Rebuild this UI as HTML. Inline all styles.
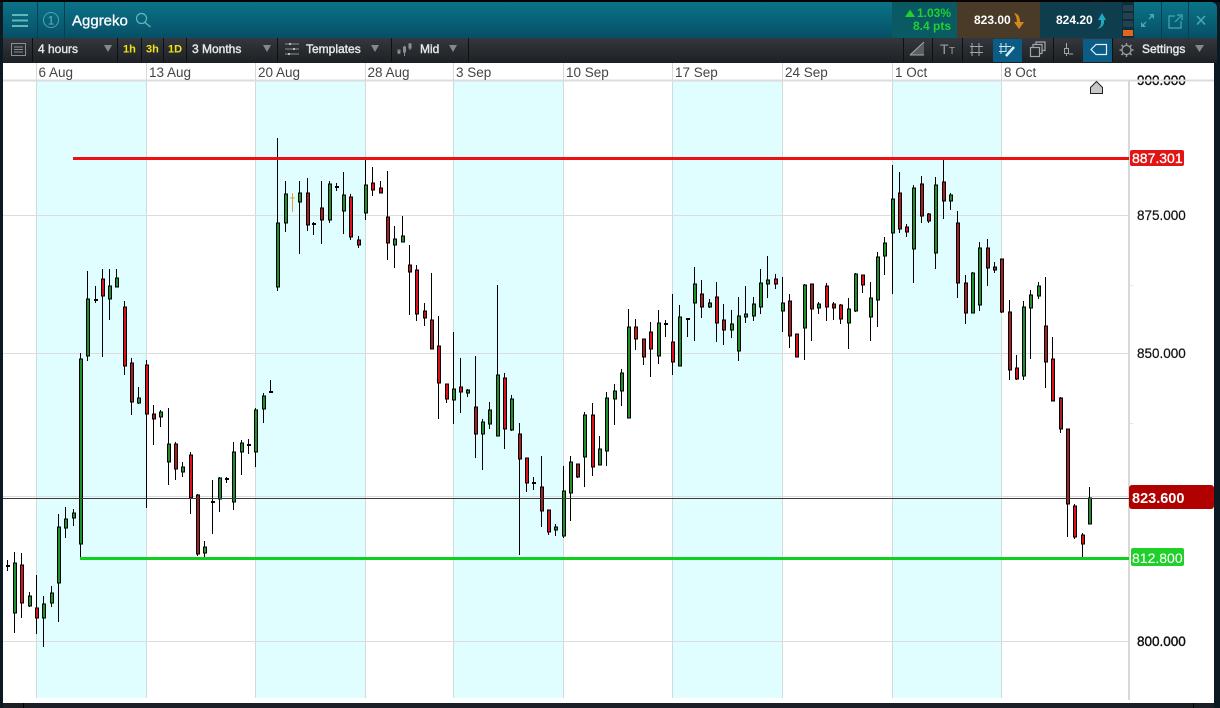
<!DOCTYPE html>
<html><head><meta charset="utf-8"><style>
html,body{margin:0;padding:0;background:#0b1a22;width:1220px;height:708px;overflow:hidden}
svg{display:block;font-family:"Liberation Sans",sans-serif}
.tb{font-size:12px;fill:#e6e8ea;stroke:#e6e8ea;stroke-width:.4}
.dt{font-size:13.5px;fill:#444}
.ax{font-size:13.5px;fill:#111;stroke:#111;stroke-width:.4}
.yl{font-size:11px;font-weight:bold;fill:#efe31c}
</style></head><body>
<svg width="1220" height="708" viewBox="0 0 1220 708" xmlns="http://www.w3.org/2000/svg">
<defs>
<linearGradient id="h" x1="0" y1="0" x2="0" y2="1"><stop offset="0" stop-color="#0b7488"/><stop offset="1" stop-color="#064f66"/></linearGradient>
<linearGradient id="t" x1="0" y1="0" x2="0" y2="1"><stop offset="0" stop-color="#34383d"/><stop offset="1" stop-color="#1d2024"/></linearGradient>
</defs>
<rect width="1220" height="708" fill="#0b1a22"/>
<rect y="0" width="1220" height="2" fill="#050505"/>
<!-- header -->
<path d="M3 2H1211a6 6 0 0 1 6 6V38H3z" fill="url(#h)"/>
<g stroke="#0a3d4e" stroke-width="1"><path d="M37.500 2V38M64.500 2V38"/></g>
<rect x="892" y="2" width="65" height="36" fill="#0a5a63"/>
<rect x="957" y="2" width="83" height="36" fill="#4a3b29"/>
<rect x="1040" y="2" width="82" height="36" fill="#0e3e4e"/>
<rect x="1122" y="2" width="12" height="36" fill="#0b2f3c"/>
<g fill="#24414d"><rect x="1123" y="5" width="10" height="6"/><rect x="1123" y="13" width="10" height="6"/><rect x="1123" y="21" width="10" height="6"/></g>
<rect x="1123" y="30" width="10" height="6" fill="#e2661c"/>
<path d="M1161.500 2V38M1188.500 2V38" stroke="#0a3d4e"/>
<path d="M12 15H28M12 20.500H28M12 26H28" stroke="#62b7bd" stroke-width="2"/>
<circle cx="51" cy="20" r="7.500" fill="none" stroke="#4ea5b0" stroke-width="1"/>
<text x="51" y="24.500" font-size="12" fill="#5fb3bd" text-anchor="middle">1</text>
<text x="72" y="25.500" font-size="15" fill="#fff" stroke="#fff" stroke-width=".3">Aggreko</text>
<circle cx="141.500" cy="18.500" r="5" fill="none" stroke="#62b7bd" stroke-width="1.200"/>
<path d="M145 22.500L150.500 27" stroke="#62b7bd" stroke-width="1.300"/>
<polygon points="905,17 915,17 910,9.500" fill="#1fd030"/>
<text x="951" y="17" font-size="12" font-weight="bold" fill="#1fd030" text-anchor="end">1.03%</text>
<text x="951" y="30" font-size="12" font-weight="bold" fill="#1fd030" text-anchor="end">8.4 pts</text>
<text x="974" y="24" font-size="12" font-weight="bold" fill="#fff">823.00</text>
<path d="M1014 13Q1020 14 1020 22H1024L1019 29L1014 22H1017Q1017 17 1014 13Z" fill="#d68a1e"/>
<text x="1056" y="24" font-size="12" font-weight="bold" fill="#fff">824.20</text>
<path d="M1097 29Q1102 26 1101 20H1098L1102 13L1106 20H1104Q1105 27 1097 29Z" fill="#22a9c0"/>
<g stroke="#45a9b4" stroke-width="1.300" fill="none">
<path d="M1142 26L1146 22M1153 15L1149 19"/>
<path d="M1175 16H1169V28H1181V21M1175 22L1181 16M1177 15H1182V20" stroke-width="1.200"/>
<path d="M1197 16L1205 24.500M1205 16L1197 24.500" stroke-width="1.600"/>
</g>
<polygon points="1141,27 1141,22 1146,27" fill="#45a9b4"/><polygon points="1154,14 1154,19 1149,14" fill="#45a9b4"/>
<!-- toolbar -->
<rect x="3" y="38" width="1214" height="25" fill="url(#t)"/>
<g stroke="#0e1012"><path d="M32.500 38V62M117.500 38V62M141.500 38V62M163.500 38V62M186.500 38V62M277.500 38V62M391.500 38V62M468.500 38V62M903.500 38V62M932.500 38V62M962.500 38V62M1053.500 38V62M1112.500 38V62"/></g>
<rect x="993" y="39" width="29" height="23" fill="#0a5c85"/>
<rect x="1083" y="39" width="29" height="23" fill="#0a5c85"/>
<rect x="11.500" y="43.500" width="14" height="12" fill="none" stroke="#8b8f93"/>
<path d="M14 47H23M14 49.500H23M14 52H23" stroke="#8b8f93"/>
<text x="38" y="53" class="tb">4 hours</text>
<text x="123" y="52.500" class="yl">1h</text>
<text x="146" y="52.500" class="yl">3h</text>
<text x="168" y="52.500" class="yl">1D</text>
<text x="192" y="53" class="tb">3 Months</text>
<text x="306" y="53" class="tb">Templates</text>
<text x="420" y="53" class="tb">Mid</text>
<text x="1142" y="53" class="tb">Settings</text>
<g fill="#85898d"><polygon points="104,45 112,45 108,52"/><polygon points="263,45 271,45 267,52"/><polygon points="371,45 379,45 375,52"/><polygon points="449,45 457,45 453,52"/><polygon points="1195,45 1204,45 1199.500,52"/></g>
<g stroke="#8b8f93" stroke-width="1.300" fill="none">
<path d="M285 44H299M285 49H299M285 54H299" stroke-width="1"/>
<path d="M290 43V45M294 48V50M289 53V55" stroke="#ddd" stroke-width="1.500"/>
<path d="M399 51V54M404.500 46V56M410 43V50" stroke-width="1"/>
<rect x="398" y="50" width="2" height="3" stroke-width="1"/><rect x="403.500" y="47" width="2" height="5" stroke-width="1"/><rect x="409" y="44" width="2" height="4" stroke-width="1"/>
</g>
<!-- right toolbar icons -->
<path d="M910 55L924 42V55Z" fill="#5a5e62"/><path d="M910 55L924 42M910 55H924" stroke="#a6a9ac" fill="none"/>
<text x="940" y="54" font-size="14" fill="#9a9da0">T</text><text x="949" y="54" font-size="10" fill="#9a9da0">T</text>
<path d="M972 43V56M979 43V56M970 46.500H983M970 52.500H983" stroke="#a3a6a9" stroke-width="1"/>
<path d="M1001 43V54M1006 43V52M999 46.500H1011M999 51.500H1006" stroke="#cfe6f2" stroke-width="1"/>
<path d="M1006 56L1014 47" stroke="#d8ecf6" stroke-width="2.500"/>
<g fill="none" stroke="#a3a6a9" stroke-width="1.200"><rect x="1030.500" y="47.500" width="9" height="9"/><path d="M1033 47V44.500H1042V53.500H1039.500"/><path d="M1036 44V42H1045V50.500H1042"/></g>
<path d="M1066.500 43V56M1069 54H1073" stroke="#a3a6a9"/><rect x="1064.500" y="48.500" width="4" height="5" fill="#2a2d31" stroke="#a3a6a9"/>
<path d="M1091 49.500L1096 44.500H1106.500V54.500H1096Z" fill="none" stroke="#e2f0f6" stroke-width="1.200"/>
<g stroke="#9a9da0" fill="none"><circle cx="1126.500" cy="50" r="4.500" stroke-width="1.300"/><path d="M1126.500 43V45M1126.500 55V57M1119.500 50H1122M1131 50H1133.500M1121.500 45L1123.300 46.800M1131.500 45L1129.700 46.800M1121.500 55L1123.300 53.200M1131.500 55L1129.700 53.200" stroke-width="1.500"/></g>
<!-- chart area -->
<rect x="3" y="63" width="1211" height="640" fill="#fff"/>
<g fill="#e0fdff"><rect x="37" y="81" width="109" height="617"/><rect x="256" y="81" width="109" height="617"/><rect x="453" y="81" width="110" height="617"/><rect x="672" y="81" width="110" height="617"/><rect x="892" y="81" width="109" height="617"/></g>
<g stroke="#d0dcdc" stroke-width="1"><path d="M36.500 63V698M146.500 63V698M255.500 63V698M365.500 63V698M453.500 63V698M563.500 63V698M672.500 63V698M782.500 63V698M892.500 63V698M1001.500 63V698"/></g>
<g stroke="#dcdcdc" stroke-width="1"><path d="M3 215.500H1129M3 353.500H1129M3 641.500H1129M3 496.500H1129"/></g>
<path d="M3 80.500H1214" stroke="#dcdcdc" stroke-width="2"/>
<rect x="1128" y="80" width="2" height="620" fill="#d8d8d8"/>
<path d="M1130 423.500H1133M1130 285.500H1133" stroke="#e6e6e6"/>
<g class="dt"><text x="38.500" y="77" class="dt">6 Aug</text><text x="149" y="77" class="dt">13 Aug</text><text x="258" y="77" class="dt">20 Aug</text><text x="367.500" y="77" class="dt">28 Aug</text><text x="456" y="77" class="dt">3 Sep</text><text x="566" y="77" class="dt">10 Sep</text><text x="675" y="77" class="dt">17 Sep</text><text x="785" y="77" class="dt">24 Sep</text><text x="895" y="77" class="dt">1 Oct</text><text x="1004" y="77" class="dt">8 Oct</text></g>
<!-- wicks -->
<path stroke="#000" stroke-width="1" fill="none" shape-rendering="crispEdges" d="M7.500 560V571M14.500 552V633M21.500 553V618M29.500 592V607M36.500 575V634M43.500 596V647M51.500 586V607M58.500 514V622M65.500 507V538M73.500 509V526M80.500 353V557M87.500 271V361M95.500 286V303M102.500 269V357M109.500 269V320M116.500 269V287M124.500 301V375M131.500 358V415M138.500 387V404M146.500 360V508M153.500 405V445M160.500 410V427M168.500 408V485M175.500 442V480M182.500 462V477M190.500 452V514M197.500 494V556M204.500 541V557M212.500 480V534M219.500 477V512M226.500 477V483M233.500 442V510M241.500 440V475M248.500 439V454M255.500 408V467M263.500 393V423M270.500 380V393M277.500 138V291M285.500 181V232M299.500 181V254M307.500 178V231M313.500 222V235M321.500 181V244M329.500 181V223M336.500 183V191M343.500 172V234M350.500 194V240M358.500 236V248M365.500 160V220M372.500 167V196M380.500 181V193M387.500 171V260M394.500 226V268M402.500 216V242M409.500 245V315M416.500 265V321M424.500 303V326M431.500 273V349M438.500 316V419M446.500 384V403M453.500 332V424M460.500 358V413M467.500 389V397M475.500 356V458M482.500 419V470M489.500 402V429M497.500 285V436M504.500 373V449M511.500 395V431M519.500 423V555M526.500 458V492M533.500 477V490M541.500 456V527M548.500 510V535M555.500 524V536M563.500 466V538M570.500 456V521M577.500 464V478M584.500 412V487M592.500 403V476M599.500 436V465M606.500 392V466M614.500 384V425M621.500 369V406M628.500 309V418M635.500 319V350M643.500 339V365M650.500 322V377M658.500 310V364M665.500 320V337M672.500 294V375M679.500 305V366M687.500 319V337M694.500 267V341M701.500 280V318M709.500 299V308M716.500 282V342M723.500 304V345M731.500 310V338M738.500 297V361M745.500 286V323M753.500 297V321M760.500 269V314M767.500 256V298M775.500 274V289M782.500 277V332M789.500 294V348M796.500 334V357M804.500 284V360M811.500 284V341M818.500 302V314M826.500 283V321M833.500 302V320M840.500 304V324M848.500 298V349M855.500 273V312M862.500 275V293M870.500 282V341M877.500 252V327M884.500 237V275M892.500 165V294M899.500 172V233M906.500 224V237M913.500 185V283M921.500 176V223M928.500 213V223M935.500 177V269M943.500 160V219M950.500 193V210M957.500 211V298M965.500 275V324M972.500 272V313M979.500 242V311M987.500 239V286M994.500 262V273M1001.500 259V313M1009.500 300V380M1016.500 355V380M1023.500 301V380M1030.500 290V359M1038.500 282V299M1045.500 277V388M1052.500 337V401M1060.500 397V433M1067.500 429V537M1074.500 504V539M1082.500 533V557M1089.500 487V524"/>
<path stroke="#e0a040" stroke-width="1" fill="none" shape-rendering="crispEdges" d="M292.500 193V212M290 198H295"/>
<!-- doji -->
<path stroke="#000" stroke-width="2" fill="none" shape-rendering="crispEdges" d="M6 566h4M94 300h4M211 502h4M225 479h4M247 445h4M269 392h4M312 224h4M335 187h4M532 483h4M664 324h4M686 319h4"/>
<!-- green bodies -->
<path fill="#1d8f2b" stroke="#000" stroke-width="1" shape-rendering="crispEdges" d="M13.500 563h3V613h-3zM28.500 596h3V606h-3zM42.500 604h3V618h-3zM50.500 593h3V603h-3zM57.500 527h3V583h-3zM64.500 519h3V528h-3zM72.500 513h3V518h-3zM79.500 359h3V544h-3zM86.500 299h3V356h-3zM108.500 286h3V299h-3zM115.500 278h3V287h-3zM137.500 398h3V403h-3zM159.500 412h3V417h-3zM167.500 444h3V462h-3zM181.500 467h3V472h-3zM203.500 547h3V553h-3zM218.500 478h3V499h-3zM232.500 452h3V502h-3zM240.500 443h3V452h-3zM254.500 410h3V452h-3zM262.500 396h3V409h-3zM276.500 223h3V287h-3zM284.500 194h3V223h-3zM298.500 193h3V202h-3zM328.500 184h3V220h-3zM342.500 195h3V211h-3zM364.500 185h3V213h-3zM393.500 239h3V245h-3zM401.500 236h3V242h-3zM452.500 389h3V400h-3zM466.500 390h3V393h-3zM481.500 422h3V434h-3zM488.500 410h3V424h-3zM496.500 375h3V436h-3zM510.500 399h3V430h-3zM554.500 527h3V530h-3zM562.500 491h3V536h-3zM569.500 462h3V493h-3zM583.500 415h3V457h-3zM598.500 449h3V465h-3zM605.500 398h3V451h-3zM613.500 391h3V399h-3zM620.500 373h3V391h-3zM627.500 327h3V418h-3zM657.500 323h3V356h-3zM678.500 317h3V366h-3zM693.500 284h3V303h-3zM708.500 303h3V307h-3zM730.500 324h3V330h-3zM737.500 316h3V351h-3zM744.500 314h3V317h-3zM752.500 304h3V316h-3zM759.500 283h3V307h-3zM766.500 280h3V284h-3zM781.500 303h3V311h-3zM803.500 285h3V328h-3zM817.500 304h3V308h-3zM847.500 309h3V323h-3zM854.500 274h3V311h-3zM869.500 298h3V317h-3zM876.500 257h3V300h-3zM883.500 243h3V256h-3zM891.500 199h3V233h-3zM912.500 188h3V249h-3zM934.500 185h3V253h-3zM949.500 195h3V201h-3zM971.500 273h3V313h-3zM978.500 248h3V305h-3zM1022.500 307h3V376h-3zM1029.500 295h3V308h-3zM1037.500 286h3V296h-3zM1088.500 498h3V524h-3z"/>
<!-- bright red bodies -->
<path fill="#dc101a" stroke="#000" stroke-width="1" shape-rendering="crispEdges" d="M20.500 565h3V603h-3zM35.500 608h3V618h-3zM101.500 279h3V296h-3zM123.500 307h3V366h-3zM145.500 365h3V414h-3zM189.500 455h3V498h-3zM349.500 197h3V237h-3zM371.500 183h3V190h-3zM379.500 188h3V193h-3zM415.500 270h3V314h-3zM437.500 346h3V383h-3zM445.500 384h3V399h-3zM459.500 387h3V392h-3zM525.500 458h3V483h-3zM547.500 510h3V532h-3zM591.500 415h3V467h-3zM634.500 327h3V339h-3zM649.500 332h3V349h-3zM671.500 342h3V362h-3zM715.500 297h3V323h-3zM774.500 279h3V284h-3zM795.500 334h3V357h-3zM825.500 286h3V307h-3zM839.500 305h3V319h-3zM861.500 275h3V285h-3zM905.500 227h3V232h-3zM1015.500 368h3V379h-3zM1051.500 359h3V401h-3zM1073.500 506h3V537h-3zM1081.500 535h3V544h-3zM503.500 378h3V429h-3z"/>
<!-- dark red bodies -->
<path fill="#a81d22" stroke="#000" stroke-width="1" shape-rendering="crispEdges" d="M130.500 363h3V402h-3zM152.500 414h3V419h-3zM174.500 444h3V469h-3zM196.500 495h3V554h-3zM306.500 193h3V225h-3zM320.500 208h3V220h-3zM357.500 240h3V245h-3zM386.500 217h3V243h-3zM408.500 265h3V272h-3zM423.500 311h3V318h-3zM430.500 320h3V349h-3zM474.500 407h3V434h-3zM518.500 434h3V459h-3zM540.500 487h3V511h-3zM576.500 464h3V477h-3zM642.500 339h3V357h-3zM700.500 294h3V307h-3zM722.500 320h3V330h-3zM788.500 301h3V336h-3zM810.500 284h3V309h-3zM832.500 304h3V308h-3zM898.500 193h3V229h-3zM920.500 184h3V216h-3zM927.500 214h3V221h-3zM942.500 182h3V201h-3zM956.500 223h3V283h-3zM964.500 283h3V313h-3zM986.500 248h3V268h-3zM993.500 267h3V270h-3zM1000.500 259h3V312h-3zM1008.500 312h3V370h-3zM1044.500 326h3V362h-3zM1059.500 398h3V429h-3zM1066.500 429h3V504h-3z"/>
<!-- levels -->
<rect x="73" y="157" width="1056" height="3" fill="#ee1010"/>
<rect x="80" y="557" width="1049" height="3" fill="#0fd01f"/>
<path d="M3 498.500H1129" stroke="#3a3a3a" stroke-width="1"/>
<!-- axis -->
<text x="1137" y="85" class="ax">900.000</text>
<path d="M1130 80.500H1214" stroke="#dcdcdc" stroke-width="2"/>
<text x="1137" y="220" class="ax" style="stroke-width:.2">875.000</text>
<text x="1137" y="358" class="ax" style="stroke-width:.2">850.000</text>
<text x="1137" y="646" class="ax">800.000</text>
<rect x="1130" y="150" width="54" height="16" rx="2" fill="#e01515"/>
<text x="1132" y="163" font-size="14" fill="#fff" stroke="#fff" stroke-width=".3">887.301</text>
<rect x="1129" y="485" width="85" height="24" rx="3" fill="#b00000"/>
<text x="1132" y="503" font-size="14.500" font-weight="bold" fill="#fff">823.600</text>
<rect x="1131" y="548" width="53" height="18" rx="2" fill="#1fd028"/>
<text x="1132" y="563" font-size="14" fill="#fff" stroke="#fff" stroke-width=".1">812.800</text>
<path d="M1096.500 81.500L1102.500 87.500V93.500H1090.500V87.500Z" fill="#c8c8c8" stroke="#222" stroke-width="1"/>
<!-- bottom strip -->
<rect x="3" y="703" width="1211" height="5" fill="#1a2026"/>
<path d="M23.500 703V708" stroke="#000"/>
<path d="M1193.500 703V708" stroke="#000"/>
</svg>
</body></html>
